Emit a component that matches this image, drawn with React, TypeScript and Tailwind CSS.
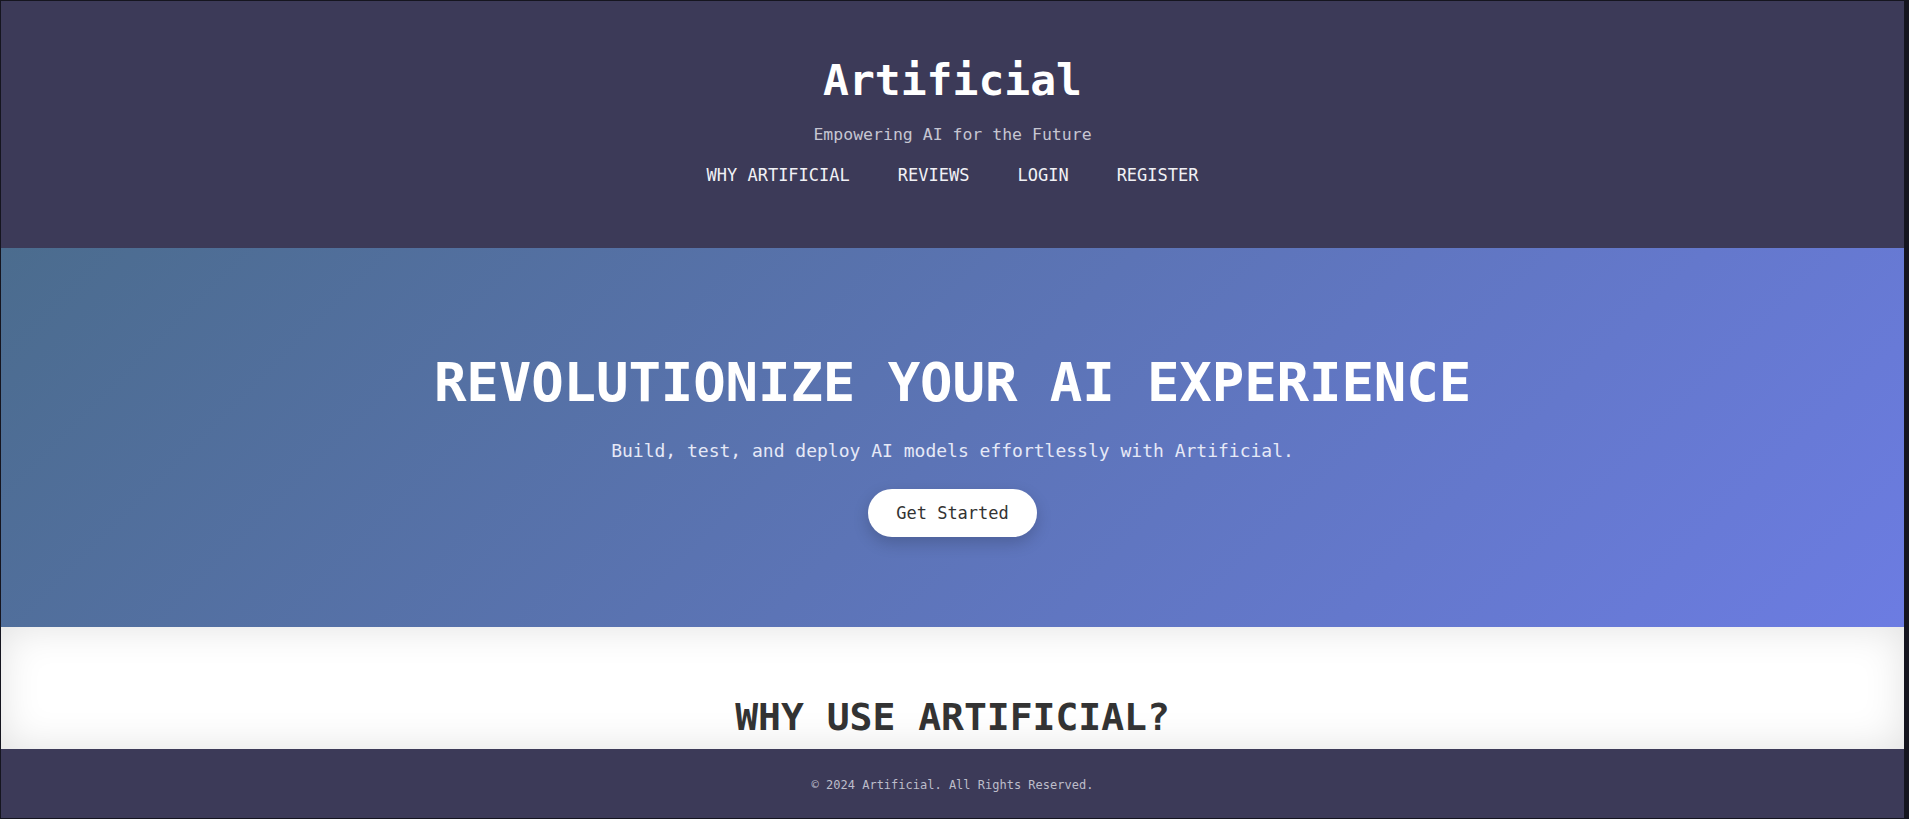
const NAV_LINKS = ['WHY ARTIFICIAL', 'REVIEWS', 'LOGIN', 'REGISTER']

export default function App() {
  return (
    <div className="box-border min-h-screen w-full border border-r-[5px] border-[#15151f] bg-white font-['DejaVu_Sans_Mono','Liberation_Mono',monospace]">
      {/* header */}
      <header className="flex flex-col items-center bg-[#3c3a58] pt-[58px] pb-[64px]">
        <h1 className="text-[43px] font-bold leading-none text-white">Artificial</h1>
        <p className="mt-[24px] text-[16.5px] leading-[17px] text-[#c6c6d2]">Empowering AI for the Future</p>
        <nav className="mt-[24px] flex gap-[48px]">
          {NAV_LINKS.map((link) => (
            <a key={link} href="#" className="text-[17px] leading-none text-[#f1f1f5]">
              {link}
            </a>
          ))}
        </nav>
      </header>

      {/* hero */}
      <section className="flex flex-col items-center bg-[linear-gradient(135deg,#4b6c8e_0%,#5c74b6_50%,#6c7ce2_100%)] pt-[108px] pb-[90px]">
        <h2 className="text-[54px] font-bold leading-none tracking-[-0.1px] text-white">REVOLUTIONIZE YOUR AI EXPERIENCE</h2>
        <p className="mt-[32px] text-[18px] leading-none text-[#e6e9f7]">
          Build, test, and deploy AI models effortlessly with Artificial.
        </p>
        <button className="mt-[29px] rounded-full bg-white px-[28px] py-[15.5px] text-[17px] leading-none text-[#333] shadow-[0_6px_16px_rgba(0,0,0,0.18)]">
          Get Started
        </button>
      </section>

      {/* features */}
      <section className="flex flex-col items-center bg-white pt-[71px] pb-[13px] shadow-[inset_0_0_40px_rgba(0,0,0,0.12)]">
        <h2 className="text-[38px] font-bold leading-none text-[#333]">WHY USE ARTIFICIAL?</h2>
      </section>

      {/* footer */}
      <footer className="bg-[#3c3a58] pt-[30px] pb-[27px] text-center">
        <p className="text-[12px] leading-none text-[#bdbdca]">© 2024 Artificial. All Rights Reserved.</p>
      </footer>
    </div>
  )
}
